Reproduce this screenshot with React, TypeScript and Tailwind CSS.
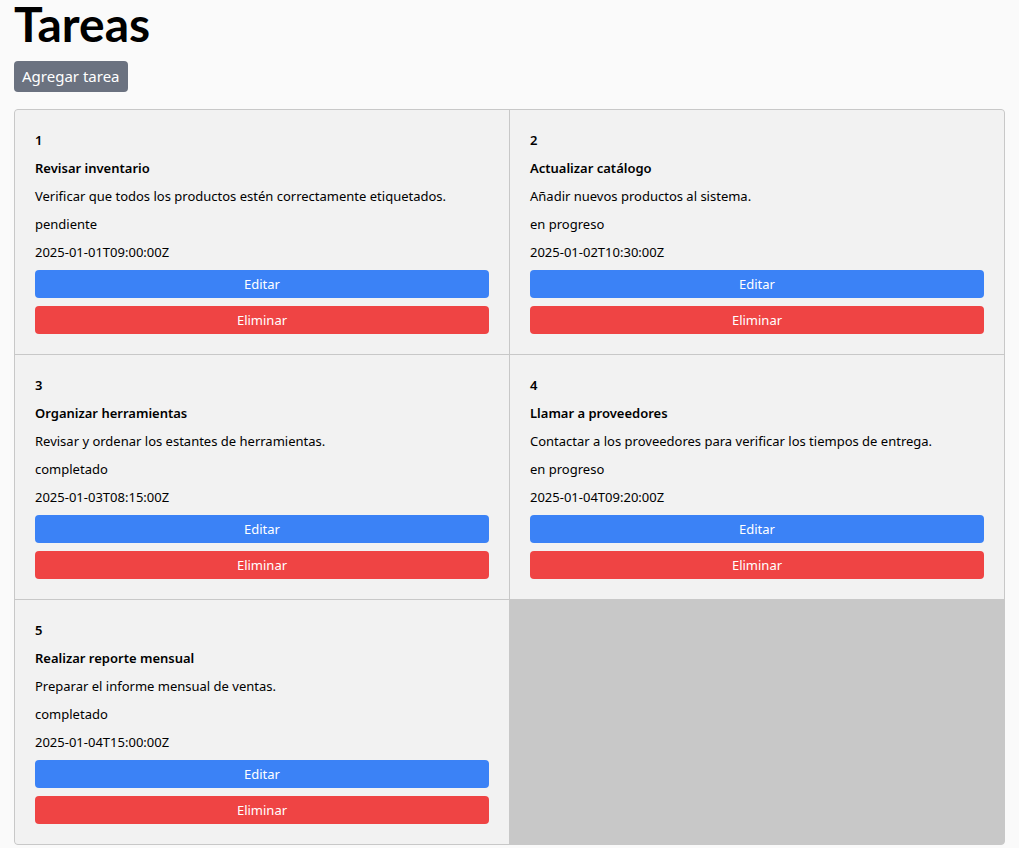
import React from 'react';

const tareas = [
  { id: 1, titulo: 'Revisar inventario', descripcion: 'Verificar que todos los productos estén correctamente etiquetados.', estado: 'pendiente', fecha: '2025-01-01T09:00:00Z' },
  { id: 2, titulo: 'Actualizar catálogo', descripcion: 'Añadir nuevos productos al sistema.', estado: 'en progreso', fecha: '2025-01-02T10:30:00Z' },
  { id: 3, titulo: 'Organizar herramientas', descripcion: 'Revisar y ordenar los estantes de herramientas.', estado: 'completado', fecha: '2025-01-03T08:15:00Z' },
  { id: 4, titulo: 'Llamar a proveedores', descripcion: 'Contactar a los proveedores para verificar los tiempos de entrega.', estado: 'en progreso', fecha: '2025-01-04T09:20:00Z' },
  { id: 5, titulo: 'Realizar reporte mensual', descripcion: 'Preparar el informe mensual de ventas.', estado: 'completado', fecha: '2025-01-04T15:00:00Z' },
];

const App = () => {
  return (
    <div className="min-h-screen bg-[#fafafa] px-[14px] text-black font-['Noto_Sans',sans-serif]">
      <h1 className="text-[48px] font-bold leading-[48px] font-['Lato',sans-serif]">Tareas</h1>
      <button className="mt-[13px] bg-[#6b7280] text-white text-[15px] leading-[23px] px-[8px] h-[31px] rounded">
        Agregar tarea
      </button>

      {/* Lista de tareas */}
      <div className="mt-[17px] grid grid-cols-2 gap-px bg-[#c8c8c8] border border-[#c8c8c8] rounded overflow-hidden">
        {tareas.map((t) => (
          <div key={t.id} className="bg-[#f2f2f2] p-[20px] text-[13px] leading-[20px]">
            <p className="font-semibold mb-[8px]">{t.id}</p>
            <p className="font-semibold mb-[8px]">{t.titulo}</p>
            <p className="mb-[8px]">{t.descripcion}</p>
            <p className="mb-[8px]">{t.estado}</p>
            <p className="mb-[8px]">{t.fecha}</p>
            <button className="w-full h-[28px] bg-[#3b82f6] text-white rounded mb-[8px]">Editar</button>
            <button className="w-full h-[28px] bg-[#ef4444] text-white rounded">Eliminar</button>
          </div>
        ))}
      </div>
    </div>
  );
};

export default App;
